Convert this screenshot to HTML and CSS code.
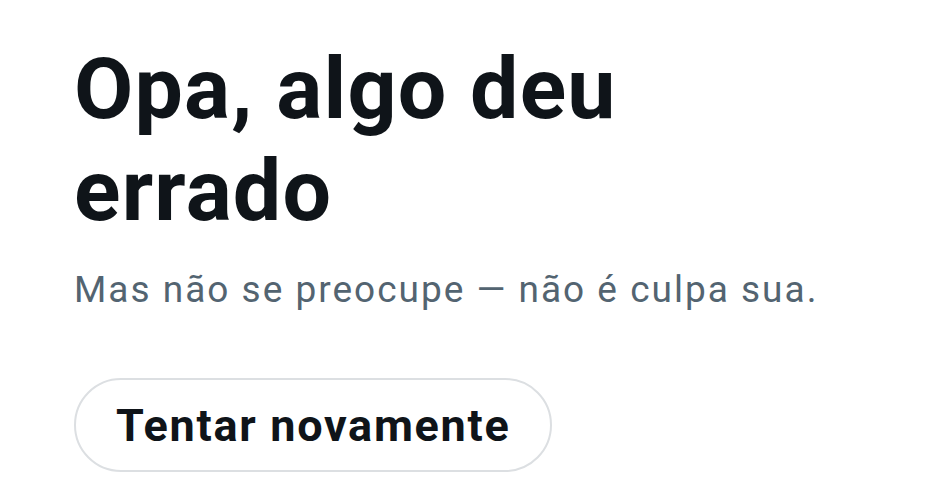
FILE: index.html
```html
<!DOCTYPE html>
<html lang="pt">
  <head>
    <meta name="viewport" content="width=device-width, initial-scale=1.0" />
    <title>Opa, algo deu errado</title>
    <link rel="stylesheet" href="styles.css">
  </head>
  <body>
    <main class="error-page">
      <h1 class="error-title">Opa, algo deu errado</h1>
      <p class="error-text">Mas não se preocupe — não é culpa sua.</p>
      <button class="retry-button">Tentar novamente</button>
    </main>
  </body>
</html>
```

FILE: styles.css
```css
html,
body {
  margin: 0;
  background: #ffffff;
  font-family: Roboto, "Liberation Sans", sans-serif;
}

.error-page {
  display: flex;
  flex-direction: column;
  align-items: flex-start;
  padding: 38px 0 0 74px;
  max-width: 640px;
}

.error-title {
  margin: 0;
  font-size: 86px;
  line-height: 102px;
  font-weight: 700;
  color: #0f1419;
  letter-spacing: 1.2px;
}

.error-text {
  margin: 26px 0 0;
  font-size: 37px;
  line-height: 44px;
  color: #536471;
  letter-spacing: 2px;
  white-space: nowrap;
}

/* Pill button with a light outline */
.retry-button {
  margin-top: 66px;
  height: 94px;
  padding: 0 40px;
  border: 2px solid #dcdfe2;
  border-radius: 47px;
  background: #ffffff;
  font-family: inherit;
  font-size: 45px;
  font-weight: 700;
  letter-spacing: 1.7px;
  color: #0f1419;
}
```
